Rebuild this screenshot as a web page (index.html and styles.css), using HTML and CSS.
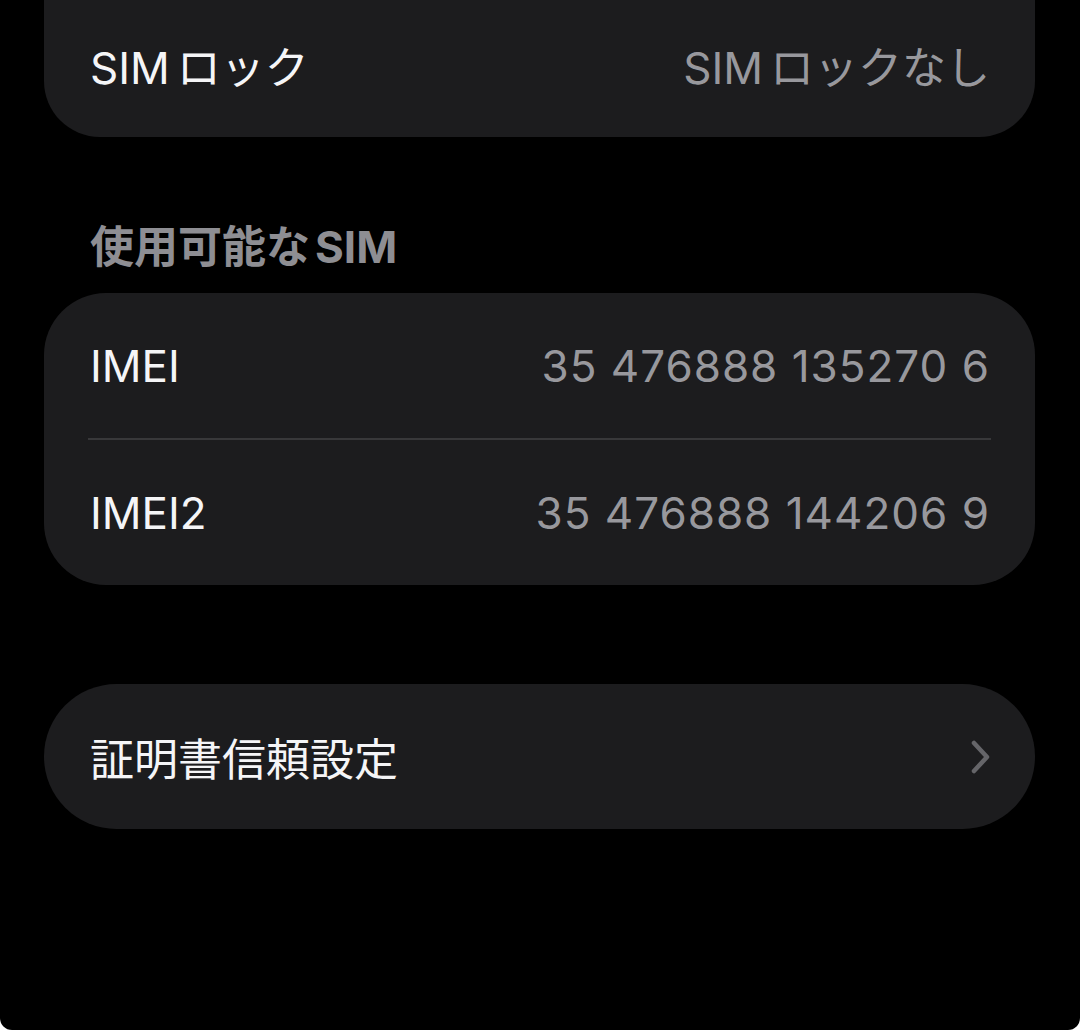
FILE: index.html
```html
<!DOCTYPE html>
<html lang="ja">
<head>
    <meta charset="UTF-8">
    <title>SIM情報</title>
    <link rel="stylesheet" href="styles.css">
</head>
<body>
    <div class="screen">
        <div class="card card-top">
            <div class="row">
                <span class="label"><span class="latin">SIM</span>ロック</span>
                <span class="value"><span class="latin">SIM</span>ロックなし</span>
            </div>
        </div>

        <h2 class="section-title">使用可能な<span class="latin-end">SIM</span></h2>

        <div class="card">
            <div class="row">
                <span class="label">IMEI</span>
                <span class="value number">35 476888 135270 6</span>
            </div>
            <div class="divider"></div>
            <div class="row">
                <span class="label">IMEI2</span>
                <span class="value number">35 476888 144206 9</span>
            </div>
        </div>

        <div class="card card-link">
            <div class="row">
                <span class="label">証明書信頼設定</span>
                <svg class="chevron" width="22" height="36" viewBox="0 0 22 36">
                    <polyline points="4,4 17,18 4,32" fill="none" stroke="#656569" stroke-width="4.5" stroke-linecap="round" stroke-linejoin="round"/>
                </svg>
            </div>
        </div>
    </div>
</body>
</html>
```

FILE: styles.css
```css
html {
    background: #fff;
}

body {
    margin: 0;
    font-family: Inter, "Noto Sans CJK JP", sans-serif;
}

.screen {
    background: #000;
    min-height: 1030px;
    padding: 0 45px 0 44px;
    border-radius: 0 0 12px 12px;
    overflow: hidden;
    box-sizing: border-box;
}

.card {
    background: #1c1c1e;
    border-radius: 62px;
}

.card-top {
    margin-top: -8px;
    border-radius: 0 0 56px 56px;
}

.card-link {
    margin-top: 99px;
    border-radius: 73px;
}

.row {
    display: flex;
    align-items: center;
    justify-content: space-between;
    height: 145px;
    padding: 0 45px 0 46px;
}

.label {
    color: #f5f5f7;
    font-size: 44px;
}

.value {
    color: #98989d;
    font-size: 44px;
}

.latin {
    margin-right: 7px;
}

.latin-end {
    margin-left: 5px;
}

.number {
    letter-spacing: 1px;
}

.divider {
    height: 2px;
    margin: 0 44px;
    background: #38383a;
}

.section-title {
    margin: 80px 0 16px;
    padding-left: 46px;
    line-height: 60px;
    font-size: 44px;
    font-weight: bold;
    color: #8e8e93;
}

.chevron {
    display: block;
    margin-right: -2px;
}
```
